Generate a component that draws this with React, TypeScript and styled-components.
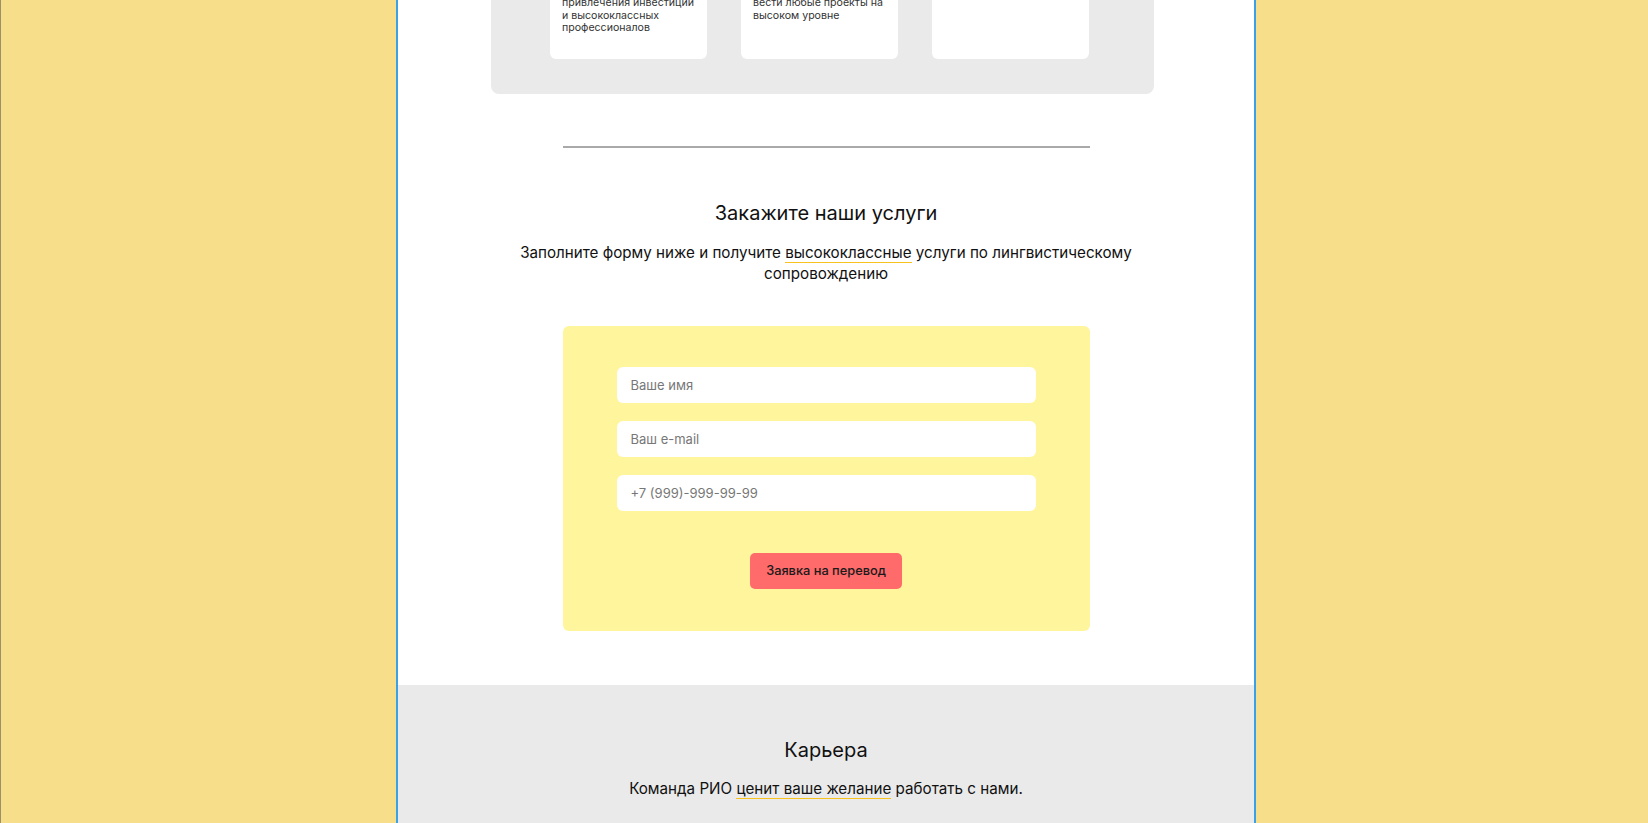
import React from 'react';
import styled, { createGlobalStyle } from 'styled-components';

const GlobalStyle = createGlobalStyle`
  html, body {
    margin: 0;
    padding: 0;
    overflow: hidden;
  }
  body {
    background: #f7de8b;
    font-family: Inter, "Noto Sans", sans-serif;
    color: #111;
  }
  * {
    box-sizing: border-box;
  }
`;

const Frame = styled.div`
  display: flex;
  justify-content: center;
  min-height: 100vh;
  padding-left: 3px;
  border-left: 1px solid #9d9068;
`;

const Page = styled.div`
  width: 860px;
  display: flex;
  flex-direction: column;
  background: #fff;
  border-left: 2px solid #3ba1e6;
  border-right: 2px solid #3ba1e6;
`;

const WhiteSection = styled.section`
  display: flex;
  flex-direction: column;
  align-items: center;
  padding-bottom: 54px;
`;

const Panel = styled.div`
  width: 663px;
  margin: -3px 7px 0 0;
  padding: 0 65px 35px 59px;
  display: flex;
  justify-content: space-between;
  background: #eaeaea;
  border-radius: 0 0 8px 8px;
`;

const Card = styled.div`
  width: 157px;
  padding: 0 12px 24px;
  background: #fff;
  border-radius: 0 0 6px 6px;
  font-size: 10.6px;
  line-height: 12.6px;
  color: #333;
`;

const Divider = styled.hr`
  width: 527px;
  height: 2px;
  margin: 52px 0 0;
  border: none;
  background: #a9a9a9;
`;

const Title = styled.h2`
  margin: 0;
  font-size: 20px;
  font-weight: 400;
  line-height: 24px;
  color: #111;
  text-align: center;
`;

const Lead = styled.p`
  margin: 0;
  font-size: 15.2px;
  line-height: 21px;
  color: #111;
  text-align: center;
`;

const Mark = styled.span`
  border-bottom: 1.5px solid #f8c21c;
`;

const OrderTitle = styled(Title)`
  margin-top: 53px;
`;

const OrderLead = styled(Lead)`
  width: 620px;
  margin-top: 17px;
`;

const Form = styled.form`
  width: 527px;
  margin-top: 42px;
  padding: 41px 54px 42px;
  display: flex;
  flex-direction: column;
  align-items: center;
  gap: 18px;
  background: #fff59c;
  border-radius: 6px;
`;

const Input = styled.input`
  width: 100%;
  height: 36px;
  padding: 0 14px;
  border: none;
  border-radius: 6px;
  background: #fff;
  font-family: inherit;
  font-size: 13px;
  color: #222;
  outline: none;

  &::placeholder {
    color: #777;
  }
`;

const Button = styled.button`
  margin-top: 24px;
  height: 36px;
  padding: 0 16px;
  border: none;
  border-radius: 5px;
  background: #ff6b6b;
  font-family: inherit;
  font-size: 12.8px;
  font-weight: 500;
  color: #1a1a1a;
  cursor: pointer;
`;

const GreySection = styled.section`
  flex: 1;
  display: flex;
  flex-direction: column;
  align-items: center;
  padding: 53px 0 80px;
  background: #eaeaea;
`;

const CareerLead = styled(Lead)`
  margin-top: 16px;
`;

const cards = [
  ['привлечения инвестиций', 'и высококлассных', 'профессионалов'],
  ['вести любые проекты на', 'высоком уровне'],
  [],
];

const App = (): JSX.Element => {
  return (
    <>
      <GlobalStyle />
      <Frame>
        <Page>
          <WhiteSection>
            <Panel>
              {cards.map((lines, i) => (
                <Card key={i}>
                  {lines.map((line) => (
                    <div key={line}>{line}</div>
                  ))}
                </Card>
              ))}
            </Panel>
            <Divider />
            <OrderTitle>Закажите наши услуги</OrderTitle>
            <OrderLead>
              Заполните форму ниже и получите <Mark>высококлассные</Mark> услуги по
              лингвистическому сопровождению
            </OrderLead>
            <Form onSubmit={(e) => e.preventDefault()}>
              <Input type="text" placeholder="Ваше имя" />
              <Input type="email" placeholder="Ваш e-mail" />
              <Input type="tel" placeholder="+7 (999)-999-99-99" />
              <Button type="submit">Заявка на перевод</Button>
            </Form>
          </WhiteSection>
          <GreySection>
            <Title>Карьера</Title>
            <CareerLead>
              Команда РИО <Mark>ценит ваше желание</Mark> работать с нами.
            </CareerLead>
          </GreySection>
        </Page>
      </Frame>
    </>
  );
};

export default App;
